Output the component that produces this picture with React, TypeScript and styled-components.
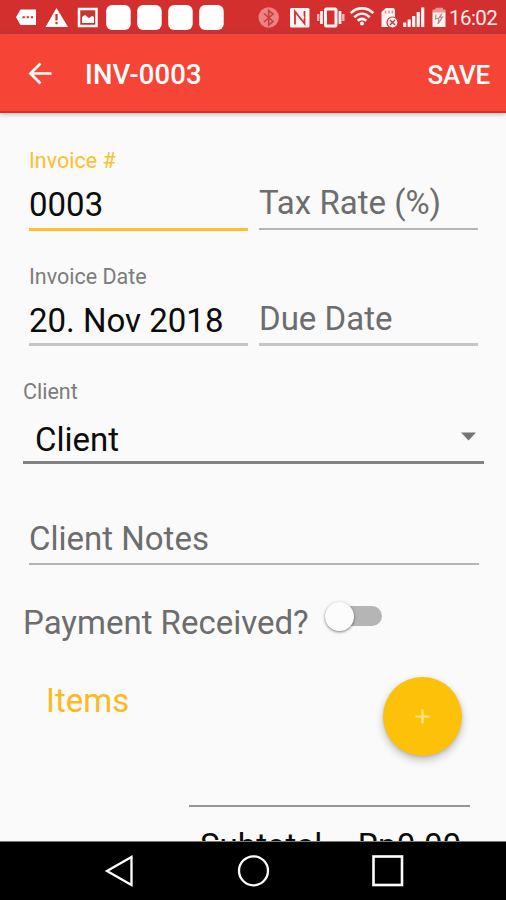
import React from "react";
import styled, { createGlobalStyle } from "styled-components";

const GlobalStyle = createGlobalStyle`
  * { box-sizing: border-box; }
  html, body { margin: 0; padding: 0; }
  body { background: #fafafa; font-family: Roboto, "Liberation Sans", sans-serif; }
`;

const Screen = styled.div`
  display: flex;
  flex-direction: column;
  width: 506px;
  height: 900px;
  overflow: hidden;
  background: #fafafa;
`;

const StatusBar = styled.header`
  display: flex;
  align-items: center;
  flex: none;
  height: 34px;
  background: #d32f2f;
  color: #fff;
`;

const Glyph = styled.svg`
  display: block;
  flex: none;
`;

const Clock = styled.time`
  font-size: 20.5px;
  line-height: 34px;
  padding-top: 2px;
  padding-left: 1px;
  letter-spacing: -0.55px;
  color: #fdeeee;
`;

const AppBar = styled.nav`
  display: flex;
  align-items: center;
  flex: none;
  height: 79px;
  padding: 3px 16px 0 27px;
  background: #f64436;
  border-bottom: 2px solid #e32a20;
  box-shadow: 0 1px 5px rgba(60, 90, 110, 0.45);
  color: #fff;
  z-index: 1;
`;

const Title = styled.h1`
  flex: 1;
  margin: 2px 0 0 31px;
  font-size: 27.5px;
  font-weight: 500;
  letter-spacing: 0.1px;
  line-height: 40px;
`;

const SaveButton = styled.button`
  border: 0;
  padding: 2px 0 0;
  background: none;
  color: #fff;
  font: 500 26px/40px Roboto, sans-serif;
  letter-spacing: -0.2px;
`;

const IconButton = styled.button`
  display: flex;
  border: 0;
  padding: 0;
  background: none;
  color: inherit;
`;

const Form = styled.main`
  display: flex;
  flex-direction: column;
  flex: 1;
  min-height: 0;
  overflow: hidden;
  padding: 35px 22px 0 23px;

  & > * {
    flex-shrink: 0;
  }
`;

const FieldRow = styled.div`
  display: grid;
  grid-template-columns: 219px 219px;
  column-gap: 11px;
  padding-left: 6px;
`;

const Field = styled.div<{ $line: string; $weight: number; $height: number }>`
  display: flex;
  flex-direction: column;
  justify-content: flex-end;
  height: ${(p) => p.$height}px;
  border-bottom: ${(p) => p.$weight}px solid ${(p) => p.$line};
`;

const Label = styled.label<{ $accent?: boolean }>`
  font-size: 21.5px;
  line-height: 24px;
  color: ${(p) => (p.$accent ? "#fdc02f" : "#7c7c7c")};
`;

const Value = styled.div<{ $muted?: boolean; $drop?: number }>`
  font-size: 33px;
  line-height: 40px;
  white-space: nowrap;
  color: ${(p) => (p.$muted ? "#6d6d6d" : "#0c0c0c")};
  margin-bottom: ${(p) => p.$drop ?? 4}px;
`;

const Gap = styled.div<{ $size: number }>`
  flex: none;
  height: ${(p) => p.$size}px;
`;

const SelectBox = styled.div`
  display: flex;
  justify-content: space-between;
  align-items: flex-start;
  width: 461px;
  height: 60px;
  padding: 16px 7px 0 12px;
  border-bottom: 3px solid #828282;
`;

const Caret = styled.svg`
  display: block;
  margin-top: 12px;
`;

const NotesWrap = styled.div`
  padding: 0 5px 0 6px;
`;

const SwitchRow = styled.div`
  display: flex;
  align-items: flex-start;
  height: 54px;
`;

const SwitchTrack = styled.div`
  display: flex;
  align-items: center;
  width: 54px;
  height: 20px;
  margin: 3px 0 0 19px;
  border-radius: 10px;
  background: #b5b5b5;
`;

const SwitchThumb = styled.div`
  width: 29px;
  height: 29px;
  flex: none;
  margin-left: -3px;
  border-radius: 50%;
  background: #fcfcfc;
  box-shadow: 0 1px 3px rgba(0, 0, 0, 0.5);
`;

const ItemsRow = styled.section`
  display: flex;
  justify-content: space-between;
  height: 128px;
  padding: 0 22px 0 23px;
`;

const ItemsTitle = styled.h2`
  margin: 4px 0 0;
  font-size: 33px;
  line-height: 40px;
  font-weight: 400;
  color: #fdb91f;
`;

const AddButton = styled.button`
  display: flex;
  align-items: center;
  justify-content: center;
  width: 79px;
  height: 79px;
  border: 0;
  padding: 0;
  border-radius: 50%;
  background: #fec10a;
  box-shadow: 0 4px 8px rgba(0, 0, 0, 0.24), 0 1px 3px rgba(0, 0, 0, 0.1);
`;

const Totals = styled.section`
  display: flex;
  justify-content: space-between;
  flex: none;
  width: 281px;
  margin-left: 166px;
  padding: 19px 9px 0 11px;
  border-top: 2px solid #969696;
`;

const NavBar = styled.footer`
  display: flex;
  align-items: center;
  justify-content: center;
  flex: none;
  height: 59px;
  background: #000;
  border-top: 1px solid #777;
`;

const white = "#fff4f4";

function LeftStatus() {
  return (
    <>
      <Glyph width="41" height="34" viewBox="0 0 41 34">
        <path d="M20.5 9.5H36V25H20.5L16 17.2Z" fill="#fff" />
        <path d="M22.5 17.2h2.3M26.6 17.2h2.3M30.7 17.2H33" stroke="#d32f2f" strokeWidth="2" />
      </Glyph>
      <Glyph width="32" height="34" viewBox="41 0 32 34">
        <path d="M56.5 8 68 27H45.5Z" fill="#fff" />
        <path d="M56.5 14v6.5M56.5 22v2.2" stroke="#d32f2f" strokeWidth="2.2" />
      </Glyph>
      <Glyph width="30" height="34" viewBox="73 0 30 34">
        <rect x="79" y="9" width="17.5" height="17" fill="#d32f2f" stroke="#fff" strokeWidth="2.5" />
        <path d="M82 13h12v9H82Z" fill="#b93a38" />
        <path d="M82 17l3-2 4 3 3-2 2 1v6H82Z" fill="#fff" />
      </Glyph>
      {[0, 1, 2, 3].map((n) => (
        <Glyph key={n} width="31" height="34" viewBox="0 0 31 34">
          <rect x="3.2" y="5" width="24.5" height="25" rx="6" fill="#fff" />
        </Glyph>
      ))}
    </>
  );
}

function RightStatus() {
  return (
    <>
      <Glyph width="58" height="34" viewBox="227 0 58 34">
        <circle cx="268.7" cy="17.5" r="10.2" fill="#e98482" />
        <path d="M264 13.5 273 21.5 268.7 25V10.5L273 14 264 22" fill="none" stroke="#cd3b3b" strokeWidth="1.6" />
      </Glyph>
      <Glyph width="29" height="34" viewBox="285 0 29 34">
        <rect x="290" y="8" width="19.5" height="19.5" rx="1.5" fill={white} />
        <path d="M295 24.500V11.500L304.500 23.500V11" fill="none" stroke="#d32f2f" strokeWidth="1.800" />
        <path d="M296.500 8.500 304 18" stroke={white} strokeWidth="1.500" />
      </Glyph>
      <Glyph width="33" height="34" viewBox="314 0 33 34">
        <rect x="325.5" y="9" width="10.5" height="17" rx="1" fill="none" stroke={white} strokeWidth="3" />
        <path d="M321.5 11v13M340 11v13" stroke={white} strokeWidth="2.8" />
        <path d="M318.2 14v7M343.3 14v7" stroke="#f6b5b4" strokeWidth="2.4" />
      </Glyph>
      <Glyph width="31" height="34" viewBox="347 0 31 34">
        <g fill="none" stroke={white} strokeWidth="2.6">
          <path d="M350.7 13.2C357 6.8 367 6.8 373.3 13.2" />
          <path d="M354.3 17.2C359 12.6 365 12.6 369.7 17.2" />
          <path d="M357.7 20.7C360.5 18.2 363.5 18.2 366.3 20.7" />
        </g>
        <circle cx="362" cy="23.600" r="2" fill={white} />
      </Glyph>
      <Glyph width="23" height="34" viewBox="378 0 23 34">
        <path d="M386 8h7.500l1.500 1.500V27H381.500V12Z" fill={white} />
        <path d="M385.500 10.500v3M389 10.500v3M392.300 10.500v3" stroke="#e58987" strokeWidth="1.400" />
        <circle cx="392.500" cy="22.500" r="5.500" fill={white} stroke="#d32f2f" strokeWidth="1.200" />
        <path d="M390 25l5-5M390 20l5 5" stroke="#d32f2f" strokeWidth="1.400" />
      </Glyph>
      <Glyph width="27" height="34" viewBox="401 0 27 34">
        <path
          d="M404.7 27v-4.5M409.2 27v-7.5M413.7 27V16M418.2 27V12M422.7 27V7.5"
          stroke={white}
          strokeWidth="3.2"
        />
      </Glyph>
      <Glyph width="20" height="34" viewBox="428 0 20 34">
        <path d="M432.5 13v-3.5h3V7.7h7.5v1.8h2.5V13Z" fill="#ee9896" />
        <path d="M432.5 12.5h13V27h-13Z" fill={white} />
        <path d="M436 14.5 435.5 19 439 18 438 24 442.5 17 439.5 17.5 442 13.5" fill="none" stroke="#b98481" strokeWidth="1.2" />
      </Glyph>
    </>
  );
}

export default function App() {
  return (
    <>
      <GlobalStyle />
      <Screen>
        <StatusBar>
          <LeftStatus />
          <RightStatus />
          <Clock>16:02</Clock>
        </StatusBar>
        <AppBar>
          <IconButton aria-label="Back">
            <Glyph width="27" height="26" viewBox="0 0 27 26" fill="none" stroke="#fff" strokeWidth="2.700">
              <path d="M24.500 12.500H4M13.500 2.500 3.500 12.500 13.500 22.500" />
            </Glyph>
          </IconButton>
          <Title>INV-0003</Title>
          <SaveButton>SAVE</SaveButton>
        </AppBar>
        <Form>
          <FieldRow>
            <Field $height={83} $weight={3} $line="#fdc12f">
              <Label $accent>Invoice #</Label>
              <Gap $size={12} />
              <Value $drop={3}>0003</Value>
            </Field>
            <Field $height={82} $weight={2} $line="#b5b5b5">
              <Value $muted $drop={5}>Tax Rate (%)</Value>
            </Field>
          </FieldRow>
          <Gap $size={33} />
          <FieldRow>
            <Field $height={82} $weight={3} $line="#c4c4c4">
              <Label>Invoice Date</Label>
              <Gap $size={12} />
              <Value $drop={2}>20. Nov 2018</Value>
            </Field>
            <Field $height={82} $weight={3} $line="#c4c4c4">
              <Value $muted $drop={4}>Due Date</Value>
            </Field>
          </FieldRow>
          <Gap $size={34} />
          <Label>Client</Label>
          <SelectBox>
            <Value>Client</Value>
            <Caret width="17" height="9" viewBox="0 0 17 9">
              <path d="M1 0.5H16L8.5 8.5Z" fill="#757575" />
            </Caret>
          </SelectBox>
          <NotesWrap>
            <Field $height={101} $weight={2} $line="#b4b4b4">
              <Value $muted>Client Notes</Value>
            </Field>
          </NotesWrap>
          <Gap $size={38} />
          <SwitchRow>
            <Value $muted>Payment Received?</Value>
            <SwitchTrack role="switch" aria-checked="false">
              <SwitchThumb />
            </SwitchTrack>
          </SwitchRow>
          <Gap $size={20} />
          <ItemsRow>
            <ItemsTitle>Items</ItemsTitle>
            <AddButton aria-label="Add item">
              <svg width="15" height="15" viewBox="0 0 15 15" stroke="#ffe58d" strokeWidth="2.2">
                <path d="M7.5 0.5v14M0.5 7.5h14" />
              </svg>
            </AddButton>
          </ItemsRow>
          <Totals>
            <Value>Subtotal</Value>
            <Value>Rp0.00</Value>
          </Totals>
        </Form>
        <NavBar>
          <Glyph width="134" height="58" viewBox="53 842 134 58" fill="none" stroke="#fff" strokeWidth="2.3">
            <path d="M108 871 132.5 857V885Z" />
          </Glyph>
          <Glyph width="134" height="58" viewBox="187 842 134 58" fill="none" stroke="#fff" strokeWidth="2.3">
            <circle cx="254.5" cy="870.8" r="14.5" />
          </Glyph>
          <Glyph width="134" height="58" viewBox="320 842 134 58" fill="none" stroke="#fff" strokeWidth="2.6">
            <rect x="373.5" y="856.5" width="28.5" height="28.5" />
          </Glyph>
        </NavBar>
      </Screen>
    </>
  );
}
